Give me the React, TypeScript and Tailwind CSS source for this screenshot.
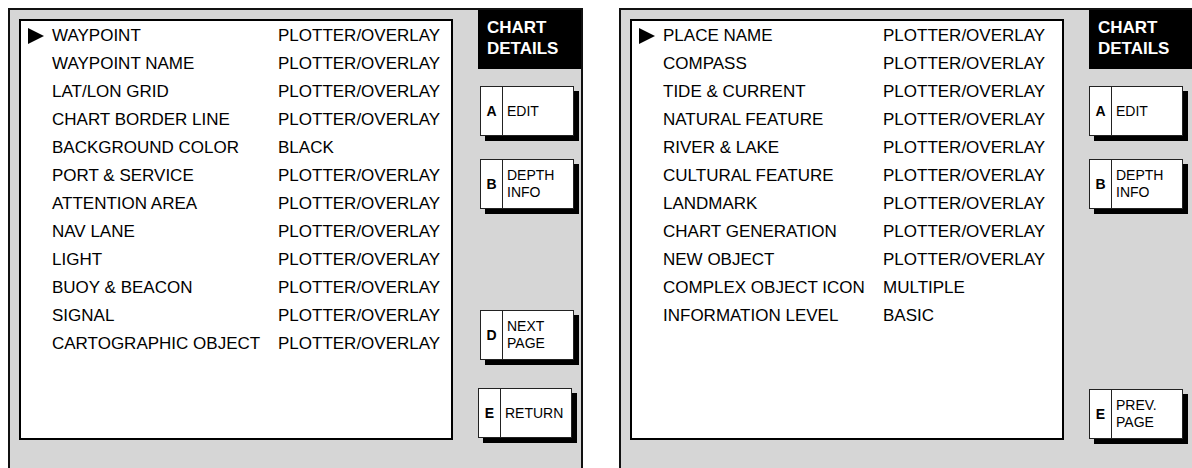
const page1 = [
  ["WAYPOINT", "PLOTTER/OVERLAY"],
  ["WAYPOINT NAME", "PLOTTER/OVERLAY"],
  ["LAT/LON GRID", "PLOTTER/OVERLAY"],
  ["CHART BORDER LINE", "PLOTTER/OVERLAY"],
  ["BACKGROUND COLOR", "BLACK"],
  ["PORT & SERVICE", "PLOTTER/OVERLAY"],
  ["ATTENTION AREA", "PLOTTER/OVERLAY"],
  ["NAV LANE", "PLOTTER/OVERLAY"],
  ["LIGHT", "PLOTTER/OVERLAY"],
  ["BUOY & BEACON", "PLOTTER/OVERLAY"],
  ["SIGNAL", "PLOTTER/OVERLAY"],
  ["CARTOGRAPHIC OBJECT", "PLOTTER/OVERLAY"],
]

const page2 = [
  ["PLACE NAME", "PLOTTER/OVERLAY"],
  ["COMPASS", "PLOTTER/OVERLAY"],
  ["TIDE & CURRENT", "PLOTTER/OVERLAY"],
  ["NATURAL FEATURE", "PLOTTER/OVERLAY"],
  ["RIVER & LAKE", "PLOTTER/OVERLAY"],
  ["CULTURAL FEATURE", "PLOTTER/OVERLAY"],
  ["LANDMARK", "PLOTTER/OVERLAY"],
  ["CHART GENERATION", "PLOTTER/OVERLAY"],
  ["NEW OBJECT", "PLOTTER/OVERLAY"],
  ["COMPLEX OBJECT ICON", "MULTIPLE"],
  ["INFORMATION LEVEL", "BASIC"],
]

// Cursor arrow in front of the selected row
const Cursor = () => (
  <svg width="16" height="16" viewBox="0 0 16 16">
    <polygon points="0,0 16,8 0,16" fill="#000" />
  </svg>
)

// Soft key on the right column, black drop shadow like the manual drawings
const SoftKey = ({ k, lines, className = "" }: { k: string; lines: string[]; className?: string }) => (
  <div className={`flex w-[94px] h-[50px] bg-white border border-[#222] shadow-[5px_5px_0_#000] ${className}`}>
    <div className="w-[22px] border-r border-[#222] flex items-center justify-center font-bold text-[14px]">
      {k}
    </div>
    <div className="flex-1 flex flex-col justify-center pl-[4px] text-[14px] leading-[17px]">
      {lines.map((l) => (
        <span key={l}>{l}</span>
      ))}
    </div>
  </div>
)

const MenuList = ({ rows, labelW }: { rows: string[][]; labelW: string }) => (
  <div className="w-[434px] h-[421px] bg-white border-2 border-black pt-[1px] pl-[7px]">
    {rows.map(([label, value], i) => (
      <div key={label} className="flex items-center h-[28px] text-[17px]">
        <div className="w-[24px] flex items-center">{i === 0 && <Cursor />}</div>
        <div className={`${labelW} whitespace-nowrap`}>{label}</div>
        <div className="whitespace-nowrap">{value}</div>
      </div>
    ))}
  </div>
)

const Panel = ({ rows, labelW, children }: { rows: string[][]; labelW: string; children: React.ReactNode }) => (
  <div className="shrink-0 w-[575px] h-[480px] bg-[#d6d6d6] border-2 border-[#111] flex">
    <div className="pt-[9px] pl-[9px]">
      <MenuList rows={rows} labelW={labelW} />
    </div>
    <div className="ml-[25px] w-[104px] flex flex-col">
      <div className="h-[59px] bg-black text-white font-bold text-[17px] leading-[21px] pt-[7px] pl-[9px]">
        <div>CHART</div>
        <div>DETAILS</div>
      </div>
      {children}
    </div>
  </div>
)

export default function App() {
  return (
    <div className="w-[1192px] h-[468px] overflow-hidden bg-white text-black font-['Liberation_Sans',Arial,sans-serif]">
      <div className="flex pt-[8px] pl-[8px] gap-[36px]">
        <Panel rows={page1} labelW="w-[226px]">
          <SoftKey k="A" lines={["EDIT"]} className="mt-[17px] ml-[2px]" />
          <SoftKey k="B" lines={["DEPTH", "INFO"]} className="mt-[23px] ml-[2px]" />
          <SoftKey k="D" lines={["NEXT", "PAGE"]} className="mt-[101px] ml-[2px]" />
          <SoftKey k="E" lines={["RETURN"]} className="mt-[28px]" />
        </Panel>
        <Panel rows={page2} labelW="w-[220px]">
          <SoftKey k="A" lines={["EDIT"]} className="mt-[17px]" />
          <SoftKey k="B" lines={["DEPTH", "INFO"]} className="mt-[23px]" />
          <SoftKey k="E" lines={["PREV.", "PAGE"]} className="mt-[180px]" />
        </Panel>
      </div>
    </div>
  )
}
